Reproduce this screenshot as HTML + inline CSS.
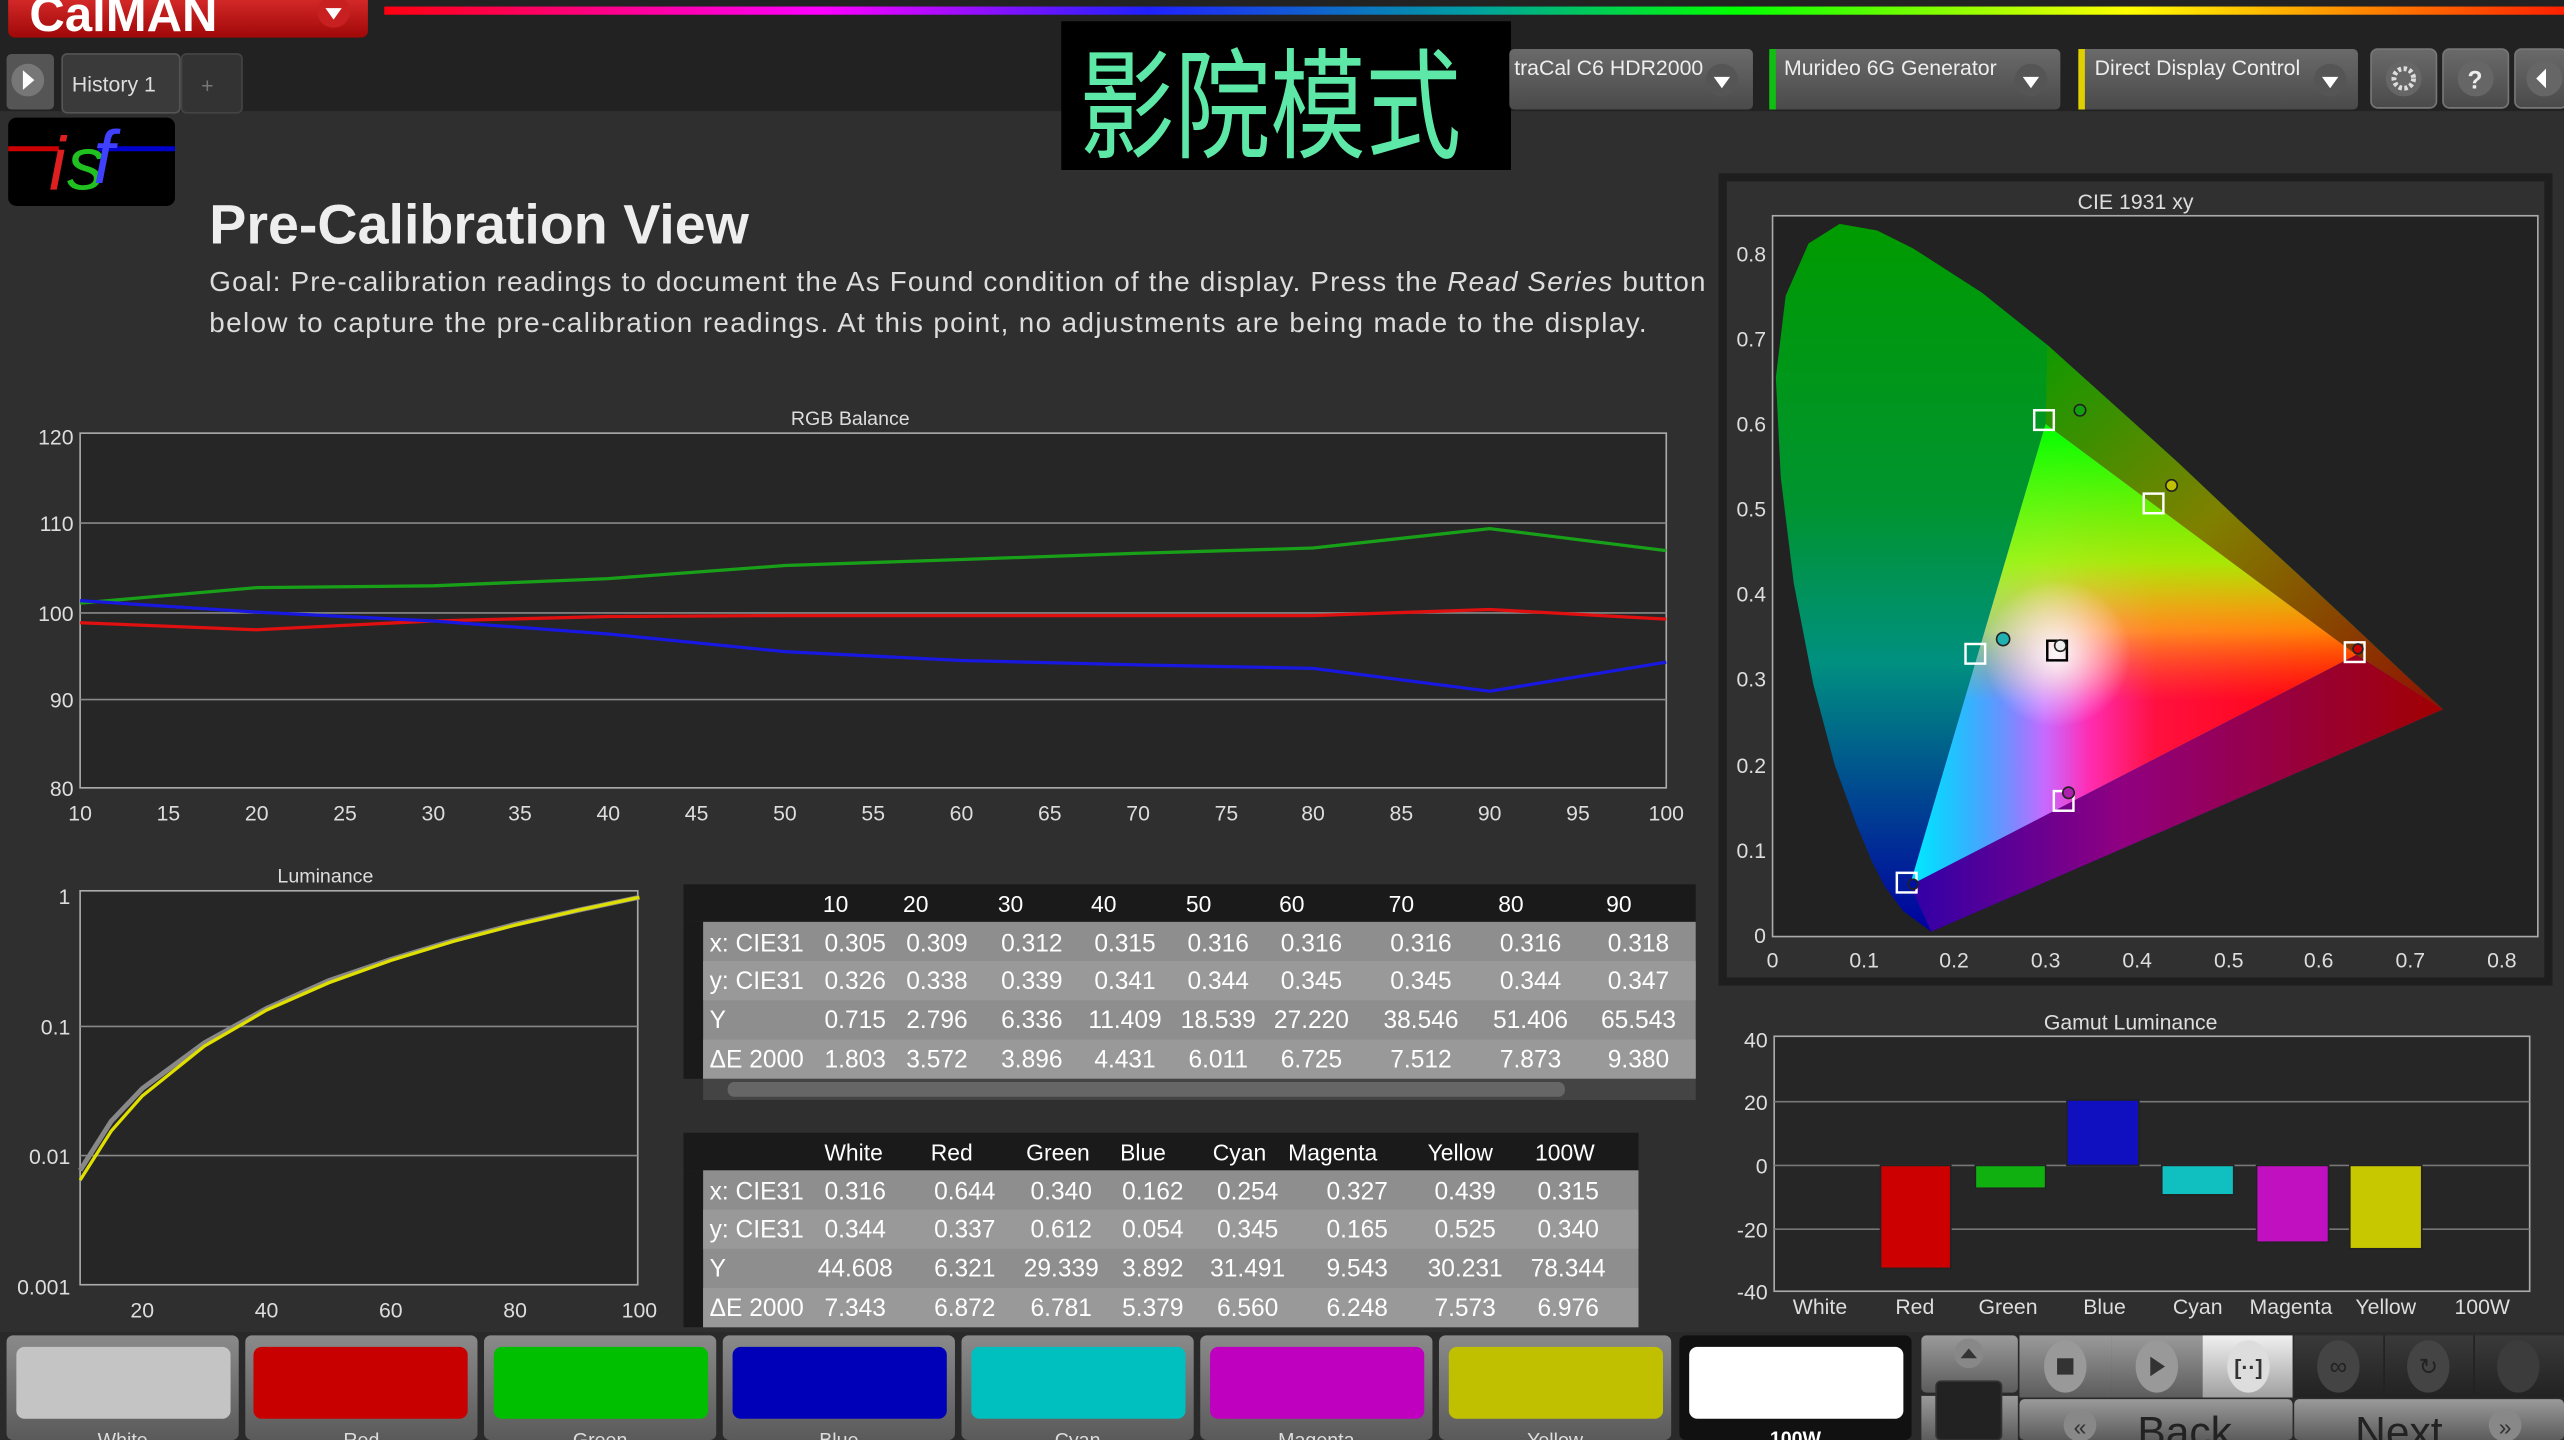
<!DOCTYPE html>
<html><head><meta charset="utf-8"><style>
html,body{margin:0;padding:0;background:#2f2f2f;overflow:hidden}
svg{display:block}
text{font-family:"Liberation Sans","Noto Sans CJK SC",sans-serif}
</style></head><body>
<svg width="2564" height="1440" viewBox="0 0 1568 881" preserveAspectRatio="none" xmlns="http://www.w3.org/2000/svg">
<defs>
<linearGradient id="rb" x1="0" x2="1"><stop offset="0" stop-color="#ff0010"/><stop offset=".2" stop-color="#ff00ff"/><stop offset=".35" stop-color="#2020ff"/><stop offset=".5" stop-color="#00a0a0"/><stop offset=".62" stop-color="#00ff00"/><stop offset=".8" stop-color="#ffff00"/><stop offset="1" stop-color="#ff2000"/></linearGradient>
<linearGradient id="btn" x1="0" y1="0" x2="0" y2="1"><stop offset="0" stop-color="#6a6a6a"/><stop offset="1" stop-color="#4a4a4a"/></linearGradient>
<linearGradient id="red" x1="0" y1="0" x2="0" y2="1"><stop offset="0" stop-color="#e03030"/><stop offset="1" stop-color="#a00808"/></linearGradient>
<linearGradient id="hs" x1="0" y1="0" x2="0" y2="1"><stop offset="0" stop-color="#009a00"/><stop offset=".4" stop-color="#009430"/><stop offset=".62" stop-color="#009080"/><stop offset=".8" stop-color="#004a90"/><stop offset="1" stop-color="#0000a0"/></linearGradient>
<linearGradient id="bot" x1="0" y1="0" x2="1" y2="0"><stop offset="0" stop-color="#3000a8"/><stop offset=".4" stop-color="#900080"/><stop offset="1" stop-color="#a00000"/></linearGradient>
<linearGradient id="up" x1="0" y1="0" x2="1" y2="1"><stop offset="0" stop-color="#109a00"/><stop offset=".45" stop-color="#808000"/><stop offset="1" stop-color="#901000"/></linearGradient>
<linearGradient id="trh" x1="0" y1="0" x2="1" y2="0"><stop offset="0" stop-color="#2040ff"/><stop offset=".3" stop-color="#ff40ff"/><stop offset=".55" stop-color="#ff1040"/><stop offset="1" stop-color="#ff0000"/></linearGradient>
<linearGradient id="trv" x1="0" y1="0" x2="0" y2="1"><stop offset="0" stop-color="#00ff00" stop-opacity="1"/><stop offset=".3" stop-color="#a0ff00" stop-opacity=".9"/><stop offset=".45" stop-color="#ffff00" stop-opacity=".5"/><stop offset=".6" stop-color="#ffa000" stop-opacity="0"/></linearGradient>
<radialGradient id="wh" cx="1258" cy="400" r="45" gradientUnits="userSpaceOnUse"><stop offset="0" stop-color="#fff" stop-opacity=".95"/><stop offset="1" stop-color="#fff" stop-opacity="0"/></radialGradient>
<linearGradient id="cy" x1="0" y1="0" x2="1" y2="0"><stop offset="0" stop-color="#00ffff" stop-opacity=".9"/><stop offset=".4" stop-color="#00ffff" stop-opacity="0"/></linearGradient>
<linearGradient id="sw" x1="0" y1="0" x2="0" y2="1"><stop offset="0" stop-color="#8a8a8a"/><stop offset="1" stop-color="#5a5a5a"/></linearGradient>
<linearGradient id="ctl" x1="0" y1="0" x2="0" y2="1"><stop offset="0" stop-color="#9a9a9a"/><stop offset="1" stop-color="#5c5c5c"/></linearGradient>
<linearGradient id="ctlw" x1="0" y1="0" x2="0" y2="1"><stop offset="0" stop-color="#f0f0f0"/><stop offset="1" stop-color="#a0a0a0"/></linearGradient>
<linearGradient id="ctld" x1="0" y1="0" x2="0" y2="1"><stop offset="0" stop-color="#3a3a3a"/><stop offset="1" stop-color="#222"/></linearGradient>
</defs>

<rect width="1568" height="881" fill="#2f2f2f"/>
<rect width="1568" height="68" fill="#222"/>
<rect x="235" y="4" width="1333" height="5" fill="url(#rb)"/>
<rect x="5" y="-6" width="220" height="29" rx="4" fill="url(#red)"/>
<text x="18" y="19" font-size="30" font-weight="bold" fill="#fff">CalMAN</text>
<circle cx="204" cy="7" r="10" fill="#c82020"/><path d="M199 5 L209 5 L204 12Z" fill="#fff"/>
<rect x="4" y="33" width="29" height="34" rx="3" fill="#555"/><circle cx="17" cy="49" r="10" fill="#777"/><path d="M14 43 L21 49 L14 55Z" fill="#fff"/>
<rect x="38" y="33" width="72" height="36" rx="3" fill="#3a3a3a" stroke="#555"/>
<text x="44" y="56" font-size="13" fill="#ddd">History 1</text>
<rect x="111" y="33" width="37" height="36" rx="3" fill="#333" stroke="#444"/><text x="123" y="57" font-size="13" fill="#777">+</text>
<rect x="649" y="13" width="275" height="91" fill="#000"/>
<text transform="translate(660,91) scale(0.8,1)" font-size="73" fill="#5ee8a8" font-family="Noto Sans CJK SC,sans-serif">影院模式</text>
<rect x="923" y="30" width="149" height="37" rx="3" fill="url(#btn)"/>
<text x="926" y="46" font-size="13" fill="#eee">traCal C6 HDR2000</text>
<circle cx="1053" cy="49" r="10" fill="#555"/><path d="M1048 47 L1058 47 L1053 54Z" fill="#fff"/>
<rect x="1082" y="30" width="178" height="37" rx="3" fill="url(#btn)"/><rect x="1082" y="30" width="4" height="37" fill="#10c010"/>
<text x="1091" y="46" font-size="13" fill="#eee">Murideo 6G Generator</text>
<circle cx="1242" cy="49" r="10" fill="#555"/><path d="M1237 47 L1247 47 L1242 54Z" fill="#fff"/>
<rect x="1271" y="30" width="171" height="37" rx="3" fill="url(#btn)"/><rect x="1271" y="30" width="4" height="37" fill="#e0d000"/>
<text x="1281" y="46" font-size="13" fill="#eee">Direct Display Control</text>
<circle cx="1425" cy="49" r="10" fill="#555"/><path d="M1420 47 L1430 47 L1425 54Z" fill="#fff"/>
<rect x="1450" y="30" width="40" height="36" rx="4" fill="url(#btn)" stroke="#777"/><circle cx="1470" cy="48" r="11" fill="#666"/><circle cx="1470" cy="48" r="6" fill="none" stroke="#ddd" stroke-width="3" stroke-dasharray="2 1.5"/>
<rect x="1494" y="30" width="40" height="36" rx="4" fill="url(#btn)" stroke="#777"/><circle cx="1514" cy="48" r="11" fill="#666"/><text x="1509" y="54" font-size="15" font-weight="bold" fill="#eee">?</text>
<rect x="1538" y="30" width="32" height="36" rx="4" fill="url(#btn)" stroke="#777"/><circle cx="1556" cy="48" r="11" fill="#666"/><path d="M1557 42 L1551 48 L1557 54Z" fill="#fff"/>
<rect x="5" y="72" width="102" height="54" rx="5" fill="#000"/>
<line x1="5" y1="91" x2="36" y2="91" stroke="#c00" stroke-width="3"/><line x1="60" y1="91" x2="107" y2="91" stroke="#00c" stroke-width="3"/>
<text x="30" y="116" font-size="46" font-style="italic" font-family="Liberation Serif,serif" fill="#e02020">i</text>
<text x="41" y="116" font-size="46" font-style="italic" font-family="Liberation Serif,serif" fill="#20c020">s</text>
<text x="57" y="112" font-size="46" font-style="italic" font-family="Liberation Serif,serif" fill="#4040ff">f</text>
<text x="128" y="149" font-size="34" font-weight="bold" fill="#eee">Pre-Calibration View</text>
<text x="128" y="178" font-size="17" fill="#ddd" textLength="915">Goal: Pre-calibration readings to document the As Found condition of the display. Press the <tspan font-style="italic">Read Series</tspan> button</text>
<text x="128" y="203" font-size="17" fill="#ddd" textLength="879">below to capture the pre-calibration readings. At this point, no adjustments are being made to the display.</text>

<text x="520" y="260" font-size="12" fill="#ddd" text-anchor="middle">RGB Balance</text>
<rect x="49" y="265" width="970" height="217" fill="#262626" stroke="#aaa"/>
<g stroke="#888" stroke-width="1"><line x1="49" y1="320" x2="1019" y2="320"/><line x1="49" y1="375" x2="1019" y2="375"/><line x1="49" y1="428" x2="1019" y2="428"/></g>
<g font-size="13" fill="#ddd" text-anchor="end"><text x="45" y="272">120</text><text x="45" y="325">110</text><text x="45" y="380">100</text><text x="45" y="433">90</text><text x="45" y="487">80</text></g>
<g font-size="13" fill="#ddd" text-anchor="middle">
<text x="49" y="502">10</text><text x="103" y="502">15</text><text x="157" y="502">20</text><text x="211" y="502">25</text><text x="265" y="502">30</text><text x="318" y="502">35</text><text x="372" y="502">40</text><text x="426" y="502">45</text><text x="480" y="502">50</text><text x="534" y="502">55</text><text x="588" y="502">60</text><text x="642" y="502">65</text><text x="696" y="502">70</text><text x="750" y="502">75</text><text x="803" y="502">80</text><text x="857" y="502">85</text><text x="911" y="502">90</text><text x="965" y="502">95</text><text x="1019" y="502">100</text></g>
<polyline fill="none" stroke="#18a018" stroke-width="2" points="49,369 157,359.5 265,358.4 372,354 480,346 588,342.3 696,338.5 803,335.3 911,323.4 1019,336.9"/>
<polyline fill="none" stroke="#e01010" stroke-width="2" points="49,381 157,385.3 265,379.9 372,377.2 480,376.6 588,376.6 696,376.6 803,376.6 911,372.9 1019,378.8"/>
<polyline fill="none" stroke="#1818e0" stroke-width="2" points="49,367.5 157,374.5 265,379.9 372,387.9 480,398.7 588,404.1 696,406.8 803,408.9 911,422.9 1019,405.1"/>

<text x="199" y="540" font-size="12" fill="#ddd" text-anchor="middle">Luminance</text>
<rect x="49" y="545" width="341" height="241" fill="#262626" stroke="#aaa"/>
<g stroke="#888"><line x1="49" y1="628" x2="390" y2="628"/><line x1="49" y1="707" x2="390" y2="707"/></g>
<g font-size="13" fill="#ddd" text-anchor="end"><text x="43" y="553">1</text><text x="43" y="633">0.1</text><text x="43" y="712">0.01</text><text x="43" y="792">0.001</text></g>
<g font-size="13" fill="#ddd" text-anchor="middle"><text x="87" y="806">20</text><text x="163" y="806">40</text><text x="239" y="806">60</text><text x="315" y="806">80</text><text x="391" y="806">100</text></g>
<polyline fill="none" stroke="#888" stroke-width="3" points="49,716 68,686 87,666 125,638 163,617 201,600 239,587 277,575.5 315,565.5 353,557 391,549"/>
<polyline fill="none" stroke="#e0e000" stroke-width="2" points="49,722 68,692 87,670.5 125,640 163,618 201,601.3 239,587.6 277,576 315,566 353,557 391,549"/>

<rect x="418" y="541" width="619" height="23" fill="#1a1a1a"/>
<rect x="418" y="564" width="12" height="96" fill="#1a1a1a"/>
<rect x="430" y="564" width="607" height="96" fill="#8e8e8e"/>
<rect x="430" y="588" width="607" height="24" fill="#999"/>
<rect x="430" y="636" width="607" height="24" fill="#999"/>
<rect x="430" y="660" width="607" height="13" fill="#444"/><rect x="445" y="662" width="512" height="9" rx="4" fill="#666"/>
<g font-size="14" fill="#fff" text-anchor="middle">
<text x="511" y="558">10</text><text x="560" y="558">20</text><text x="618" y="558">30</text><text x="675" y="558">40</text><text x="733" y="558">50</text><text x="790" y="558">60</text><text x="857" y="558">70</text><text x="924" y="558">80</text><text x="990" y="558">90</text>
</g>
<g font-size="15" fill="#fff">
<text x="434" y="582">x: CIE31</text><text x="434" y="605">y: CIE31</text><text x="434" y="629">Y</text><text x="434" y="653">ΔE 2000</text>
</g>
<g font-size="15" fill="#fff" text-anchor="middle">
<text x="523" y="582">0.305</text><text x="573" y="582">0.309</text><text x="631" y="582">0.312</text><text x="688" y="582">0.315</text><text x="745" y="582">0.316</text><text x="802" y="582">0.316</text><text x="869" y="582">0.316</text><text x="936" y="582">0.316</text><text x="1002" y="582">0.318</text>
<text x="523" y="605">0.326</text><text x="573" y="605">0.338</text><text x="631" y="605">0.339</text><text x="688" y="605">0.341</text><text x="745" y="605">0.344</text><text x="802" y="605">0.345</text><text x="869" y="605">0.345</text><text x="936" y="605">0.344</text><text x="1002" y="605">0.347</text>
<text x="523" y="629">0.715</text><text x="573" y="629">2.796</text><text x="631" y="629">6.336</text><text x="688" y="629">11.409</text><text x="745" y="629">18.539</text><text x="802" y="629">27.220</text><text x="869" y="629">38.546</text><text x="936" y="629">51.406</text><text x="1002" y="629">65.543</text>
<text x="523" y="653">1.803</text><text x="573" y="653">3.572</text><text x="631" y="653">3.896</text><text x="688" y="653">4.431</text><text x="745" y="653">6.011</text><text x="802" y="653">6.725</text><text x="869" y="653">7.512</text><text x="936" y="653">7.873</text><text x="1002" y="653">9.380</text>
</g>

<rect x="418" y="693" width="584" height="23" fill="#1a1a1a"/>
<rect x="418" y="716" width="12" height="96" fill="#1a1a1a"/>
<rect x="430" y="716" width="572" height="96" fill="#8e8e8e"/>
<rect x="430" y="740" width="572" height="24" fill="#999"/>
<rect x="430" y="788" width="572" height="24" fill="#999"/>
<g font-size="14" fill="#fff" text-anchor="middle">
<text x="522" y="710">White</text><text x="582" y="710">Red</text><text x="647" y="710">Green</text><text x="699" y="710">Blue</text><text x="758" y="710">Cyan</text><text x="815" y="710">Magenta</text><text x="893" y="710">Yellow</text><text x="957" y="710">100W</text>
</g>
<g font-size="15" fill="#fff">
<text x="434" y="734">x: CIE31</text><text x="434" y="757">y: CIE31</text><text x="434" y="781">Y</text><text x="434" y="805">ΔE 2000</text>
</g>
<g font-size="15" fill="#fff" text-anchor="middle">
<text x="523" y="734">0.316</text><text x="590" y="734">0.644</text><text x="649" y="734">0.340</text><text x="705" y="734">0.162</text><text x="763" y="734">0.254</text><text x="830" y="734">0.327</text><text x="896" y="734">0.439</text><text x="959" y="734">0.315</text>
<text x="523" y="757">0.344</text><text x="590" y="757">0.337</text><text x="649" y="757">0.612</text><text x="705" y="757">0.054</text><text x="763" y="757">0.345</text><text x="830" y="757">0.165</text><text x="896" y="757">0.525</text><text x="959" y="757">0.340</text>
<text x="523" y="781">44.608</text><text x="590" y="781">6.321</text><text x="649" y="781">29.339</text><text x="705" y="781">3.892</text><text x="763" y="781">31.491</text><text x="830" y="781">9.543</text><text x="896" y="781">30.231</text><text x="959" y="781">78.344</text>
<text x="523" y="805">7.343</text><text x="590" y="805">6.872</text><text x="649" y="805">6.781</text><text x="705" y="805">5.379</text><text x="763" y="805">6.560</text><text x="830" y="805">6.248</text><text x="896" y="805">7.573</text><text x="959" y="805">6.976</text>
</g>

<rect x="1051" y="106" width="510" height="497" fill="#1e1e1e"/>
<rect x="1056" y="111" width="500" height="487" fill="#303030"/>
<text x="1306" y="128" font-size="13" fill="#ddd" text-anchor="middle">CIE 1931 xy</text>
<rect x="1084" y="132" width="468" height="441" fill="#222" stroke="#aaa"/>
<polygon fill="url(#hs)" points="1181,570 1164,557.5 1153,543 1145,527.6 1135,503.7 1122,468 1109,419 1097,357 1089,292 1086,231 1092,181 1106,149 1125,137 1148,141 1170,152 1212,179 1252,211 1292,247 1332,283 1370,319 1405,351 1434,378 1470,412 1494,434"/>
<polygon fill="url(#up)" points="1251,259.5 1252,211 1292,247 1332,283 1370,319 1405,351 1434,378 1470,412 1494,434 1441,400.6"/>
<polygon fill="url(#bot)" points="1168,541.6 1441,400.6 1494,434 1181,570"/>
<polygon fill="url(#trh)" points="1251,259.5 1441,400.6 1168,541.6"/>
<polygon fill="url(#cy)" points="1251,259.5 1441,400.6 1168,541.6"/>
<polygon fill="url(#trv)" points="1251,259.5 1441,400.6 1168,541.6"/>
<circle cx="1258" cy="400" r="45" fill="url(#wh)"/>
<g fill="none" stroke="#fff" stroke-width="1.5">
<rect x="1244" y="251" width="12" height="12"/><rect x="1311" y="302" width="12" height="12"/><rect x="1434" y="393" width="12" height="12"/><rect x="1202" y="394" width="12" height="12"/><rect x="1160" y="534" width="12" height="12"/><rect x="1256" y="484" width="12" height="12"/><rect x="1252" y="392" width="12" height="12" stroke="#000"/></g>
<g stroke="#222" stroke-width="1"><circle cx="1272" cy="251" r="3.5" fill="#10a010"/><circle cx="1328" cy="297" r="3.5" fill="#c0c000"/><circle cx="1225" cy="391" r="4" fill="#20b0b0"/><circle cx="1260" cy="395" r="3.5" fill="#eee"/><circle cx="1265" cy="485" r="3.5" fill="#b020b0"/><circle cx="1442" cy="397" r="3" fill="#c00"/><circle cx="1170" cy="541" r="3" fill="#0010a0"/></g>
<g font-size="13" fill="#ddd" text-anchor="end"><text x="1080" y="160">0.8</text><text x="1080" y="212">0.7</text><text x="1080" y="264">0.6</text><text x="1080" y="316">0.5</text><text x="1080" y="368">0.4</text><text x="1080" y="420">0.3</text><text x="1080" y="473">0.2</text><text x="1080" y="525">0.1</text><text x="1080" y="577">0</text></g>
<g font-size="13" fill="#ddd" text-anchor="middle"><text x="1084" y="592">0</text><text x="1140" y="592">0.1</text><text x="1195" y="592">0.2</text><text x="1251" y="592">0.3</text><text x="1307" y="592">0.4</text><text x="1363" y="592">0.5</text><text x="1418" y="592">0.6</text><text x="1474" y="592">0.7</text><text x="1530" y="592">0.8</text></g>

<text x="1303" y="630" font-size="13" fill="#ddd" text-anchor="middle">Gamut Luminance</text>
<rect x="1085" y="634" width="462" height="156" fill="#262626" stroke="#aaa"/>
<g stroke="#777"><line x1="1085" y1="674" x2="1547" y2="674"/><line x1="1085" y1="713" x2="1547" y2="713"/><line x1="1085" y1="752" x2="1547" y2="752"/></g>
<g font-size="13" fill="#ddd" text-anchor="end"><text x="1081" y="641">40</text><text x="1081" y="679">20</text><text x="1081" y="718">0</text><text x="1081" y="757">-20</text><text x="1081" y="795">-40</text></g>
<rect x="1150" y="713" width="43" height="63" fill="#c00" stroke="#222"/>
<rect x="1208" y="713" width="43" height="14" fill="#10b010" stroke="#222"/>
<rect x="1264" y="673" width="44" height="40" fill="#1010c0" stroke="#222"/>
<rect x="1322" y="713" width="44" height="18" fill="#10c0c0" stroke="#222"/>
<rect x="1380" y="713" width="44" height="47" fill="#c010c0" stroke="#222"/>
<rect x="1437" y="713" width="44" height="51" fill="#c8c800" stroke="#222"/>
<g font-size="13" fill="#ddd" text-anchor="middle"><text x="1113" y="804">White</text><text x="1171" y="804">Red</text><text x="1228" y="804">Green</text><text x="1287" y="804">Blue</text><text x="1344" y="804">Cyan</text><text x="1401" y="804">Magenta</text><text x="1459" y="804">Yellow</text><text x="1518" y="804">100W</text></g>

<rect x="0" y="815" width="1568" height="66" fill="#2a2a2a"/>
<g>
<rect x="4" y="817" width="142" height="64" rx="4" fill="url(#sw)"/><rect x="10" y="824" width="131" height="44" rx="5" fill="#c4c4c4"/>
<rect x="150" y="817" width="142" height="64" rx="4" fill="url(#sw)"/><rect x="155" y="824" width="131" height="44" rx="5" fill="#c80000"/>
<rect x="296" y="817" width="142" height="64" rx="4" fill="url(#sw)"/><rect x="302" y="824" width="131" height="44" rx="5" fill="#00bf00"/>
<rect x="442" y="817" width="142" height="64" rx="4" fill="url(#sw)"/><rect x="448" y="824" width="131" height="44" rx="5" fill="#0000b8"/>
<rect x="588" y="817" width="142" height="64" rx="4" fill="url(#sw)"/><rect x="594" y="824" width="131" height="44" rx="5" fill="#00bfbf"/>
<rect x="734" y="817" width="142" height="64" rx="4" fill="url(#sw)"/><rect x="740" y="824" width="131" height="44" rx="5" fill="#bf00bf"/>
<rect x="880" y="817" width="142" height="64" rx="4" fill="url(#sw)"/><rect x="886" y="824" width="131" height="44" rx="5" fill="#c0c000"/>
<rect x="1027" y="817" width="142" height="64" rx="4" fill="#111"/><rect x="1033" y="824" width="131" height="44" rx="5" fill="#fff"/>
<g font-size="12" fill="#ddd" text-anchor="middle"><text x="75" y="885">White</text><text x="221" y="885">Red</text><text x="367" y="885">Green</text><text x="513" y="885">Blue</text><text x="659" y="885">Cyan</text><text x="805" y="885">Magenta</text><text x="951" y="885">Yellow</text><text x="1098" y="884" fill="#fff" font-weight="bold">100W</text></g>
</g>
<rect x="1175" y="817" width="59" height="35" rx="3" fill="url(#ctl)"/><circle cx="1204" cy="828" r="9" fill="#888"/><path d="M1199 831 L1209 831 L1204 825Z" fill="#333"/>
<rect x="1175" y="854" width="59" height="27" fill="url(#ctl)"/><rect x="1184" y="845" width="40" height="36" rx="3" fill="#222" stroke="#333"/>
<rect x="1235" y="817" width="56" height="38" fill="url(#ctl)"/><ellipse cx="1263" cy="836" rx="13" ry="16" fill="#999"/><rect x="1258" y="831" width="10" height="10" fill="#333"/>
<rect x="1291" y="817" width="56" height="38" fill="url(#ctl)"/><ellipse cx="1319" cy="836" rx="13" ry="16" fill="#999"/><path d="M1315 830 L1324 836 L1315 842Z" fill="#333"/>
<rect x="1347" y="817" width="55" height="38" fill="url(#ctlw)"/><ellipse cx="1375" cy="836" rx="13" ry="16" fill="#ddd"/><text x="1375" y="841" font-size="13" font-weight="bold" fill="#333" text-anchor="middle">[··]</text>
<rect x="1403" y="817" width="165" height="38" fill="url(#ctld)"/>
<ellipse cx="1430" cy="836" rx="13" ry="16" fill="#444"/><text x="1430" y="841" font-size="15" fill="#222" text-anchor="middle">∞</text>
<ellipse cx="1485" cy="836" rx="13" ry="16" fill="#444"/><text x="1485" y="841" font-size="14" fill="#222" text-anchor="middle">↻</text>
<ellipse cx="1540" cy="836" rx="13" ry="16" fill="#3c3c3c"/>
<line x1="1458" y1="817" x2="1458" y2="855" stroke="#222"/><line x1="1513" y1="817" x2="1513" y2="855" stroke="#222"/>
<rect x="1235" y="856" width="167" height="25" rx="3" fill="url(#ctl)"/><rect x="1403" y="856" width="165" height="25" rx="3" fill="url(#ctl)"/>
<circle cx="1272" cy="872" r="10" fill="#888"/><text x="1272" y="878" font-size="14" fill="#333" text-anchor="middle">«</text>
<text x="1336" y="885" font-size="26" fill="#222" text-anchor="middle">Back</text>
<text x="1467" y="885" font-size="26" fill="#222" text-anchor="middle">Next</text>
<circle cx="1532" cy="872" r="10" fill="#888"/><text x="1532" y="878" font-size="14" fill="#333" text-anchor="middle">»</text>
</svg>
</body></html>
